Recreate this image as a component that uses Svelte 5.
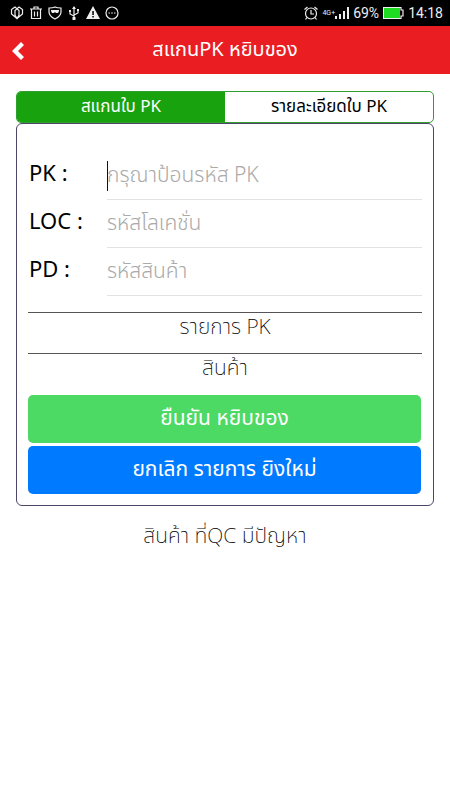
<script>
  const tabs = ['สแกนใบ PK', 'รายละเอียดใบ PK'];
  let active = $state(0);
  const fields = [
    { id: 'pk', label: 'PK :', hint: 'กรุณาป้อนรหัส PK' },
    { id: 'loc', label: 'LOC :', hint: 'รหัสโลเคชั่น' },
    { id: 'pd', label: 'PD :', hint: 'รหัสสินค้า' }
  ];
</script>

<div class="screen">
  <div class="status">
    <div class="group left">
      <svg width="14" height="14" viewBox="0 0 14 14" aria-hidden="true"><path d="M5 1 1.500 3.500v4.500L7 12.500 9 9V4.500zM9 1l3.500 2.500v4.500L7 12.500 5 9V4.500z" /></svg>
      <svg width="14" height="14" viewBox="0 0 14 14" aria-hidden="true"><path d="M1 3h12M5 3V1h4v2M2.500 3v9.500h9V3M5.500 5.500v5M8.500 5.500v5" /></svg>
      <svg width="14" height="14" viewBox="0 0 14 14" aria-hidden="true"><path d="M7 1c2 1 4 1 6 1v4c0 3-2 5-6 7-4-2-6-4-6-7V2c2 0 4 0 6-1z" /><path class="solid" d="M3 4h8v1l-1 2H8L7 6 6 7H4L3 5z" /></svg>
      <svg width="14" height="14" viewBox="0 0 14 14" aria-hidden="true"><path d="M7 1v11M3 5v3l4 2M11 4v3L7 9" /><path class="solid" d="M7 0 5 3h4zM10 3h2v2h-2zM2 4h2v2H2zM5.500 11h3v3h-3z" /></svg>
      <svg width="14" height="14" viewBox="0 0 14 14" aria-hidden="true"><path class="solid" fill-rule="evenodd" d="M7 0 0 13h14zM6.300 5h1.500v4H6.300zM6.300 10h1.500v1.500H6.300z" /></svg>
      <svg width="14" height="14" viewBox="0 0 14 14" aria-hidden="true"><circle cx="7" cy="7" r="6" /><path d="M3.500 7h1.500M6.200 7h1.600M9 7h1.500" /></svg>
    </div>
    <div class="group right">
      <svg width="14" height="14" viewBox="0 0 14 14" aria-hidden="true"><circle cx="7" cy="7.500" r="5.500" /><path d="M7 4v4h3M.5 3.500 3.500 1M13.500 3.500 10.500 1M3 11.500 1.500 13.500M11 11.500l1.500 2" /></svg>
      <div class="signal">
        <span class="net">4G+</span>
        <svg width="14" height="12" viewBox="0 0 14 12" aria-hidden="true"><path class="solid" d="M0 9h2v3H0zM4 7h2v5H4zM8 4h2v8H8zM12 0h2v12h-2z" /></svg>
      </div>
      <span>69%</span>
      <svg width="21" height="12" viewBox="0 0 21 12" aria-hidden="true"><path d="M.5.500h17.500v2.500h2v6h-2v2.500H.5z" /><path class="charge" d="M1 1h16v10H1z" /></svg>
      <span>14:18</span>
    </div>
  </div>

  <header>
    <button class="back" aria-label="ย้อนกลับ">
      <svg width="14" height="18" viewBox="0 0 14 18" aria-hidden="true"><path class="solid" d="M9 0 0 9l9 9 3-3-6-6 6-6z" /></svg>
    </button>
    <h1>สแกนPK หยิบของ</h1>
  </header>

  <main>
    <div class="tabs" role="tablist">
      {#each tabs as tab, i}
        <button role="tab" aria-selected={active === i} class:active={active === i} onclick={() => (active = i)}>{tab}</button>
      {/each}
    </div>

    <section class="card">
      {#each fields as field, i}
        <div class="field">
          <label for={field.id}>{field.label}</label>
          <div class="entry" class:focused={i === 0}>
            <input id={field.id} type="text" placeholder={field.hint} />
          </div>
        </div>
      {/each}

      <div class="lists">
        <p>รายการ PK</p>
        <p>สินค้า</p>
      </div>

      <div class="actions">
        <button class="confirm">ยืนยัน หยิบของ</button>
        <button class="cancel">ยกเลิก รายการ ยิงใหม่</button>
      </div>
    </section>

    <p class="note">สินค้า ที่QC มีปัญหา</p>
  </main>
</div>

<style>
  :global(body) {
    margin: 0;
    background: #fff;
  }
  .screen {
    font-family: 'Noto Sans Thai', 'Noto Sans', sans-serif;
    font-weight: 200;
    color: #000;
  }
  button,
  input {
    font: inherit;
    border: 0;
    padding: 0;
    background: none;
  }
  .status {
    display: flex;
    justify-content: space-between;
    align-items: center;
    height: 26px;
    padding: 0 7px 0 10px;
    background: #000;
    color: #eee;
    font: 400 14px/26px Roboto, sans-serif;
  }
  .group {
    display: flex;
    align-items: center;
    gap: 5px;
  }
  .right {
    gap: 4px;
  }
  .signal {
    display: flex;
    align-items: center;
  }
  .net {
    font-size: 7px;
  }
  svg {
    display: block;
    fill: none;
    stroke: #eee;
    stroke-width: 1.2;
  }
  .solid {
    fill: #eee;
    stroke: none;
  }
  .charge {
    fill: #1fdc22;
    stroke: none;
  }
  header {
    display: grid;
    grid-template-columns: 48px 1fr 48px;
    align-items: center;
    height: 48px;
    background: #ea1d22;
    color: #fff;
  }
  .back {
    height: 48px;
    padding: 2px 0 0 12px;
  }
  .back .solid {
    fill: #fff;
  }
  h1 {
    margin: 0;
    text-align: center;
    font-size: 20px;
    font-weight: 400;
    line-height: 48px;
  }
  main {
    padding: 17px 16px 0;
  }
  .tabs {
    display: flex;
    border: 1px solid #2f9f2f;
    border-radius: 5px;
    overflow: hidden;
  }
  .tabs button {
    flex: 1;
    height: 30px;
    font-size: 17px;
    font-weight: 400;
    line-height: 28px;
    color: #000;
  }
  .tabs .active {
    background: #18a30e;
    color: #fff;
  }
  .card {
    border: 1px solid #4c4668;
    border-radius: 6px;
    padding: 28px 11px 11px;
  }
  .field {
    display: flex;
    align-items: stretch;
    height: 48px;
    padding-left: 1px;
  }
  label {
    width: 78px;
    font-size: 22px;
    font-weight: 400;
    line-height: 46px;
    color: #000;
  }
  .entry {
    flex: 1;
    display: flex;
    align-items: center;
    border-bottom: 1px solid #e2e2e2;
  }
  .focused::before {
    content: '';
    width: 1px;
    height: 30px;
    margin-right: -1px;
    background: #111;
  }
  input {
    flex: 1;
    min-width: 0;
    height: 46px;
    font-size: 21px;
    font-weight: 300;
    outline: none;
  }
  input::placeholder {
    color: #aaa;
    opacity: 1;
  }
  .lists {
    padding-top: 16px;
  }
  .lists p {
    height: 40px;
    margin: 0;
    border-top: 1px solid #555;
    text-align: center;
    font-size: 21px;
    line-height: 30px;
  }
  .actions {
    display: flex;
    flex-direction: column;
    gap: 3px;
    padding: 1px 1px 0 0;
  }
  .actions button {
    height: 48px;
    border-radius: 5px;
    color: #fff;
    font-size: 21px;
    font-weight: 400;
    line-height: 46px;
  }
  .confirm {
    background: #4cd964;
  }
  .actions .cancel {
    background: #007aff;
  }
  .note {
    margin: 15px 0 0;
    text-align: center;
    font-size: 21px;
    line-height: 32px;
  }
</style>
